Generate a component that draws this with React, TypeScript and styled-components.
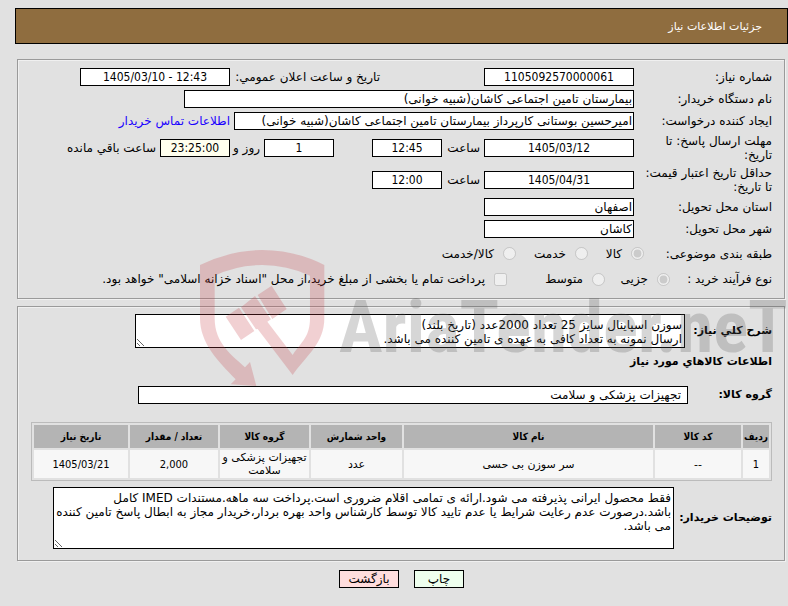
import React from "react";
import styled, { createGlobalStyle, css } from "styled-components";

const GlobalStyle = createGlobalStyle`
  *, *::before, *::after { box-sizing: border-box; }
  body {
    margin: 0;
    background: #e1e1e1;
    color: #000;
    font: 12px/14px "DejaVu Sans", Tahoma, sans-serif;
  }
  input, textarea, button { font: inherit; color: inherit; }
`;

const numeric = css`
  font-family: "DejaVu Sans Condensed", "DejaVu Sans", Tahoma, sans-serif;
`;

const Page = styled.main`
  direction: rtl;
  padding: 8px 0 18px 15px;
`;

const Header = styled.header`
  display: flex;
  align-items: center;
  height: 36px;
  padding: 2px 25px 0;
  border: 1px solid #000;
  background: #8f6d3f;
  color: #fff;
`;

const Title = styled.h1`
  margin: 0;
  font-size: 11px;
  font-weight: normal;
`;

const Content = styled.div`
  position: relative;
  padding: 15px 3px 0 2px;
`;

const Panel = styled.fieldset<{ $bottom: number }>`
  margin: 0 0 7px;
  min-width: 0;
  padding: 6px 12px ${(p) => p.$bottom}px 13px;
  border: 1px solid #9a9a9a;
  box-shadow: 1px 1px 0 #f0f0f0, inset 1px 1px 0 #f0f0f0;
`;

const Row = styled.div<{ $height?: number }>`
  display: flex;
  align-items: center;
  min-height: ${(p) => p.$height ?? 22}px;
`;

const Label = styled.label<{ $width?: number; $bold?: boolean }>`
  flex: none;
  width: ${(p) => p.$width ?? 138}px;
  padding-left: ${(p) => (p.$bold ? 0 : 10)}px;
  ${(p) => p.$bold && css`font-size: 11px; font-weight: bold; white-space: nowrap;`}
`;

const SideLabel = styled.label`
  width: 150px;
  margin-right: 104px;
  white-space: nowrap;
`;

const Unit = styled.label<{ $width?: number }>`
  width: ${(p) => p.$width ?? 42}px;
  padding-right: 4px;
  white-space: nowrap;
`;

const boxed = css`
  border: 1px solid #000;
  border-radius: 0;
  background: #fff;
  outline: none;
`;

const Field = styled.input<{ $width?: number; $center?: boolean; $tint?: boolean; $inset?: boolean }>`
  ${boxed}
  flex: none;
  width: ${(p) => p.$width ?? 150}px;
  height: 18px;
  padding: 0 ${(p) => (p.$inset ? 6 : 1)}px;
  ${(p) => p.$center && css`text-align: center; direction: ltr; ${numeric}`}
  ${(p) => p.$tint && css`background: #ffffee;`}
`;

const Gap = styled.span`
  width: 38px;
`;

const Link = styled.a`
  margin-right: 4px;
  color: #1a00ff;
  text-decoration: none;
`;

const Legend = styled.span<{ $width: number }>`
  flex: none;
  width: ${(p) => p.$width}px;
  white-space: nowrap;
`;

const Option = styled.label<{ $width?: number }>`
  display: flex;
  align-items: center;
  gap: 9px;
  flex: none;
  width: ${(p) => (p.$width ? `${p.$width}px` : "auto")};
  white-space: nowrap;
  input { flex: none; width: 13px; height: 13px; margin: 0; }
`;

const Area = styled.textarea<{ $height: number; $width: number }>`
  ${boxed}
  display: block;
  width: ${(p) => p.$width}px;
  height: ${(p) => p.$height}px;
  padding: 3px 2px 1px;
  line-height: 14px;
  overflow: hidden;
`;

const Heading = styled.h2`
  margin: 6px 0 15px;
  font-size: 11px;
  font-weight: bold;
`;

const Goods = styled.table`
  width: 100%;
  margin: 16px 0 6px;
  border: 1px solid #bbb;
  border-collapse: separate;
  border-spacing: 2px;
  table-layout: fixed;
  line-height: 13px;
  text-align: center;
  th { height: 23px; padding: 0; background: #b4b4b4; font-size: 10px; ${numeric} }
  td { height: 28px; padding: 0; background: #f7f7f7; font-size: 11px; }
`;

const NumberCell = styled.td`
  ${numeric}
`;

const Col = styled.col<{ $width?: number }>`
  width: ${(p) => (p.$width ? `${p.$width}px` : "auto")};
`;

const Actions = styled.div`
  display: flex;
  justify-content: center;
  gap: 15px;
  padding-top: 2px;
`;

const Action = styled.button<{ $width: number; $color: string }>`
  ${boxed}
  width: ${(p) => p.$width}px;
  height: 18px;
  padding: 0;
  background: ${(p) => p.$color};
`;

const Watermark = styled.svg`
  position: absolute;
  left: 180px;
  top: 200px;
  width: 593px;
  height: 150px;
  pointer-events: none;
`;

export default function App() {
  return (
    <>
      <GlobalStyle />
      <Page>
        <Header><Title>جزئیات اطلاعات نیاز</Title></Header>
        <Content>
          <Panel $bottom={7}>
            <Row>
              <Label htmlFor="number">شماره نیاز:</Label>
              <Field id="number" $center readOnly value="1105092570000061" />
              <SideLabel htmlFor="announce">تاریخ و ساعت اعلان عمومي:</SideLabel>
              <Field id="announce" $center readOnly value="1405/03/10 - 12:43" />
            </Row>
            <Row>
              <Label htmlFor="agency">نام دستگاه خریدار:</Label>
              <Field id="agency" $width={450} readOnly value="بیمارستان تامین اجتماعی کاشان(شبیه خوانی)" />
            </Row>
            <Row>
              <Label htmlFor="creator">ایجاد کننده درخواست:</Label>
              <Field id="creator" $width={400} readOnly value="امیرحسین بوستانی کارپرداز بیمارستان تامین اجتماعی کاشان(شبیه خوانی)" />
              <Link href="#contact">اطلاعات تماس خریدار</Link>
            </Row>
            <Row $height={32}>
              <Label htmlFor="deadline">مهلت ارسال پاسخ: تا تاریخ:</Label>
              <Field id="deadline" $center readOnly value="1405/03/12" />
              <Unit htmlFor="deadline-time">ساعت</Unit>
              <Field id="deadline-time" $width={70} $center readOnly value="12:45" />
              <Gap />
              <Field id="days" $width={70} $center readOnly value="1" />
              <Unit htmlFor="days" $width={34}>روز و</Unit>
              <Field id="remaining" $width={70} $center $tint readOnly value="23:25:00" />
              <Unit htmlFor="remaining" $width={100}>ساعت باقي مانده</Unit>
            </Row>
            <Row $height={32}>
              <Label htmlFor="validity">حداقل تاریخ اعتبار قیمت: تا تاریخ:</Label>
              <Field id="validity" $center readOnly value="1405/04/31" />
              <Unit htmlFor="validity-time">ساعت</Unit>
              <Field id="validity-time" $width={70} $center readOnly value="12:00" />
            </Row>
            <Row>
              <Label htmlFor="province">استان محل تحویل:</Label>
              <Field id="province" readOnly value="اصفهان" />
            </Row>
            <Row>
              <Label htmlFor="city">شهر محل تحویل:</Label>
              <Field id="city" readOnly value="کاشان" />
            </Row>
            <Row $height={27}>
              <Legend $width={128}>طبقه بندی موضوعی:</Legend>
              <Option $width={56}><input type="radio" name="kind" disabled defaultChecked />کالا</Option>
              <Option $width={72}><input type="radio" name="kind" disabled />خدمت</Option>
              <Option><input type="radio" name="kind" disabled />کالا/خدمت</Option>
            </Row>
            <Row $height={24}>
              <Legend $width={102}>نوع فرآیند خرید :</Legend>
              <Option $width={65}><input type="radio" name="process" disabled defaultChecked />جزیی</Option>
              <Option $width={98}><input type="radio" name="process" disabled />متوسط</Option>
              <Option><input type="checkbox" disabled />پرداخت تمام یا بخشی از مبلغ خرید،از محل "اسناد خزانه اسلامی" خواهد بود.</Option>
            </Row>
          </Panel>

          <Panel $bottom={11}>
            <Row $height={36}>
              <Label htmlFor="summary" $bold $width={87}>شرح کلي نیاز:</Label>
              <Area id="summary" $width={550} $height={34} readOnly value={"سوزن اسپاینال سایز 25 تعداد 2000عدد (تاریخ بلند)\nارسال نمونه به تعداد کافی به عهده ی تامین کننده می باشد."} />
            </Row>
            <Heading>اطلاعات کالاهاي مورد نیاز</Heading>
            <Row>
              <Label htmlFor="group" $bold $width={84}>گروه کالا:</Label>
              <Field id="group" $width={550} $inset readOnly value="تجهیزات پزشکی و سلامت" />
            </Row>
            <Goods>
              <colgroup>
                <Col $width={26} /><Col $width={86} /><Col /><Col $width={91} />
                <Col $width={89} /><Col $width={88} /><Col $width={94} />
              </colgroup>
              <thead>
                <tr>
                  <th>ردیف</th><th>کد کالا</th><th>نام کالا</th><th>واحد شمارش</th>
                  <th>گروه کالا</th><th>تعداد / مقدار</th><th>تاریخ نیاز</th>
                </tr>
              </thead>
              <tbody>
                <tr>
                  <NumberCell>1</NumberCell><td>--</td><td>سر سوزن بی حسی</td><td>عدد</td>
                  <td>تجهیزات پزشکی و سلامت</td><NumberCell>2,000</NumberCell><NumberCell>1405/03/21</NumberCell>
                </tr>
              </tbody>
            </Goods>
            <Row>
              <Label htmlFor="notes" $bold $width={98}>توضیحات خریدار:</Label>
              <Area id="notes" $width={621} $height={62} readOnly value="فقط محصول ایرانی پذیرفته می شود.ارائه ی تمامی اقلام ضروری است.پرداخت سه ماهه.مستندات IMED کامل باشد.درصورت عدم رعایت شرایط یا عدم تایید کالا توسط کارشناس واحد بهره بردار،خریدار مجاز به ابطال پاسخ تامین کننده می باشد." />
            </Row>
          </Panel>

          <Watermark viewBox="195 244 593 150" aria-hidden="true">
            <g transform="translate(190 240) scale(0.3333)" fill="#c33b44" fillOpacity="0.24">
              <path d="M30 75Q125 30 217 30Q315 30 403 75V235C403 310 350 345 308 405L203 267L198 268L153 202L195 168L243 238L232 245L308 345C335 305 360 290 360 235V107Q290 75 217 75Q140 75 74 107V235C74 310 125 345 165 382L180 366L199 438L122 433L137 418C85 365 30 310 30 235Z" />
              <path d="M107 230L147 203L193 273L153 300ZM203 165L245 137L290 207L247 237Z" />
            </g>
            <text x="339" y="352" direction="ltr" fill="#555" fillOpacity="0.24" fontFamily="'Roboto Condensed', 'Open Sans Condensed', 'Liberation Sans', sans-serif" fontWeight="bold" fontSize="73">AriaTender.neT</text>
          </Watermark>
        </Content>
        <Actions>
          <Action type="button" $width={50} $color="#eeffee">چاپ</Action>
          <Action type="button" $width={60} $color="#ffdddd">بازگشت</Action>
        </Actions>
      </Page>
    </>
  );
}
